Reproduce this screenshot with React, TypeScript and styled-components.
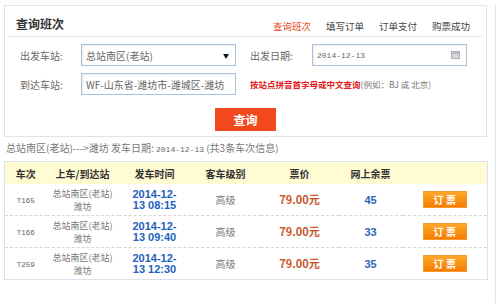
import React from "react";
import styled, { createGlobalStyle } from "styled-components";

const GlobalStyle = createGlobalStyle`
  html, body {
    margin: 0;
    padding: 0;
    background: #fff;
  }
  body {
    font-family: "Noto Sans CJK SC", "Liberation Sans", sans-serif;
    color: #555;
  }
`;

const trips = [
  { no: "T165", day: "2014-12-", time: "13 08:15", left: 45 },
  { no: "T166", day: "2014-12-", time: "13 09:40", left: 33 },
  { no: "T259", day: "2014-12-", time: "13 12:30", left: 35 },
];

const steps = ["查询班次", "填写订单", "订单支付", "购票成功"];

const App = () => {
  return (
    <Page>
      <GlobalStyle />
      <Main>
        {/* 查询面板 */}
        <SearchPanel>
          <PanelHead>
            <PanelTitle>查询班次</PanelTitle>
            <Steps>
              {steps.map((s, i) => (
                <Step key={s} $active={i === 0}>
                  {s}
                </Step>
              ))}
            </Steps>
          </PanelHead>

          <Form>
            <FormRow>
              <Label>出发车站:</Label>
              <Field>
                <span>总站南区(老站)</span>
                <Arrow>▼</Arrow>
              </Field>
              <Label $second>出发日期:</Label>
              <Field>
                <DateText>2014-12-13</DateText>
                <svg width="9" height="8" viewBox="0 0 9 8">
                  <rect x="0.5" y="0.5" width="8" height="7" fill="#d3d7dd" stroke="#a9b0ba" />
                  <rect x="1" y="1" width="7" height="2" fill="#b7bec8" />
                </svg>
              </Field>
            </FormRow>
            <FormRow>
              <Label>到达车站:</Label>
              <Field>
                <span>WF-山东省-潍坊市-潍城区-潍坊</span>
              </Field>
              <Hint>
                <strong>按站点拼音首字母或中文查询</strong>(例如：BJ 或 北京)
              </Hint>
            </FormRow>
            <ButtonRow>
              <SearchButton>查询</SearchButton>
            </ButtonRow>
          </Form>
        </SearchPanel>

        <Summary>
          总站南区(老站)---&gt;潍坊 发车日期: <DateText>2014-12-13</DateText> (共3条车次信息)
        </Summary>

        {/* 车次列表 */}
        <Table>
          <colgroup>
            <col style={{ width: 42 }} />
            <col style={{ width: 72 }} />
            <col style={{ width: 72 }} />
            <col style={{ width: 70 }} />
            <col style={{ width: 78 }} />
            <col style={{ width: 64 }} />
            <col style={{ width: 85 }} />
          </colgroup>
          <thead>
            <tr>
              <Th>车次</Th>
              <Th>上车/到达站</Th>
              <Th>发车时间</Th>
              <Th>客车级别</Th>
              <Th>票价</Th>
              <Th>网上余票</Th>
              <Th></Th>
            </tr>
          </thead>
          <tbody>
            {trips.map((t) => (
              <tr key={t.no}>
                <Td>
                  <TripNo>{t.no}</TripNo>
                </Td>
                <Td>
                  <Stations>
                    <StationLine>总站南区(老站)</StationLine>
                    <StationLine>潍坊</StationLine>
                  </Stations>
                </Td>
                <Td>
                  <DepartTime>
                    {t.day}
                    <br />
                    {t.time}
                  </DepartTime>
                </Td>
                <Td>高级</Td>
                <Td>
                  <Price>79.00元</Price>
                </Td>
                <Td>
                  <Remain>{t.left}</Remain>
                </Td>
                <Td>
                  <BookButton>订 票</BookButton>
                </Td>
              </tr>
            ))}
          </tbody>
        </Table>
      </Main>
      <Side />
    </Page>
  );
};

const Page = styled.div`
  display: flex;
  width: 499px;
  height: 303px;
  overflow: hidden;
`;

const Main = styled.div`
  width: 483px;
  margin: 5px 0 0 4px;
`;

const Side = styled.div`
  flex: 1;
  margin: 5px 0 0 8px;
  border-left: 1px solid #e4e4e4;
`;

const SearchPanel = styled.div`
  height: 132px;
  border: 1px solid #e3e3e3;
  box-sizing: border-box;
`;

const PanelHead = styled.div`
  height: 31px;
  margin: 0 3px;
  padding: 0 13px 0 8px;
  box-sizing: border-box;
  border-bottom: 1px solid #e8e8e8;
  display: flex;
  justify-content: space-between;
  align-items: center;
`;

const PanelTitle = styled.h2`
  margin: 4px 0 0;
  font-size: 12px;
  font-weight: bold;
  color: #333;
`;

const Steps = styled.div`
  display: flex;
  gap: 15px;
  margin-top: 9px;
`;

const Step = styled.span<{ $active?: boolean }>`
  font-size: 9.5px;
  color: ${(p) => (p.$active ? "#e8472b" : "#444")};
`;

const Form = styled.div`
  padding: 7px 0 0 15px;
  display: flex;
  flex-direction: column;
  gap: 7px;
`;

const FormRow = styled.div`
  display: flex;
  align-items: center;
  height: 22px;
`;

const Label = styled.span<{ $second?: boolean }>`
  width: ${(p) => (p.$second ? "62px" : "61px")};
  margin-left: ${(p) => (p.$second ? "14px" : "0")};
  font-size: 10px;
  color: #666;
`;

const Field = styled.div`
  width: 155px;
  height: 22px;
  box-sizing: border-box;
  border: 1px solid #a9c1dd;
  box-shadow: inset 1px 1px 2px rgba(0, 0, 0, 0.08);
  padding: 0 6px 0 4px;
  display: flex;
  align-items: center;
  justify-content: space-between;
  font-size: 10px;
  color: #666;
  white-space: nowrap;
`;

const Arrow = styled.span`
  font-size: 6px;
  color: #111;
`;

const DateText = styled.span`
  font-family: "Liberation Mono", monospace;
  font-size: 8px;
  color: #666;
`;

const Hint = styled.span`
  margin-left: 14px;
  font-size: 8.5px;
  color: #777;
  white-space: nowrap;

  strong {
    color: #e02020;
    font-weight: bold;
  }
`;

const ButtonRow = styled.div`
  display: flex;
  justify-content: center;
  margin: 6px 0 0 -15px;
`;

const SearchButton = styled.button`
  width: 61px;
  height: 23px;
  border: none;
  background: #f2481d;
  color: #fff;
  font-family: inherit;
  font-size: 12px;
  font-weight: bold;
  padding: 0;
  cursor: pointer;
`;

const Summary = styled.div`
  margin: 4px 0 0 2px;
  height: 14px;
  line-height: 14px;
  font-size: 10px;
  color: #777;
  white-space: nowrap;
`;

const Table = styled.table`
  margin-top: 6px;
  width: 483px;
  table-layout: fixed;
  border-collapse: collapse;
  border: 1px solid #dce2ea;
`;

const Th = styled.th`
  height: 22px;
  padding: 0;
  background: #fffbd2;
  font-size: 10px;
  font-weight: bold;
  color: #333;
  text-align: center;
`;

const Td = styled.td`
  height: 31px;
  padding: 0;
  text-align: center;
  font-size: 10px;
  line-height: 12px;
  color: #777;
  border-bottom: 1px dashed #d8d8d8;

  tr:last-child & {
    border-bottom: none;
  }
`;

const Stations = styled.div`
  display: flex;
  flex-direction: column;
  align-items: center;
`;

const StationLine = styled.span`
  font-size: 9px;
  line-height: 13px;
  height: 13px;
`;

const TripNo = styled.span`
  font-family: "Liberation Mono", monospace;
  font-size: 7.5px;
  color: #666;
`;

const DepartTime = styled.span`
  display: inline-block;
  font-family: "Liberation Sans", Arial, sans-serif;
  font-size: 11px;
  line-height: 11px;
  font-weight: bold;
  color: #1d62bd;
`;

const Price = styled.span`
  font-size: 11px;
  font-weight: bold;
  color: #c9572a;
`;

const Remain = styled.span`
  font-family: "Liberation Sans", Arial, sans-serif;
  font-size: 11px;
  font-weight: bold;
  color: #2a68b5;
`;

const BookButton = styled.button`
  width: 44px;
  height: 17px;
  padding: 0;
  border: 1px solid #f29a2e;
  background: linear-gradient(#ffa928, #f57b00);
  color: #fff;
  font-family: inherit;
  font-size: 10px;
  font-weight: bold;
  cursor: pointer;
`;

export default App;
